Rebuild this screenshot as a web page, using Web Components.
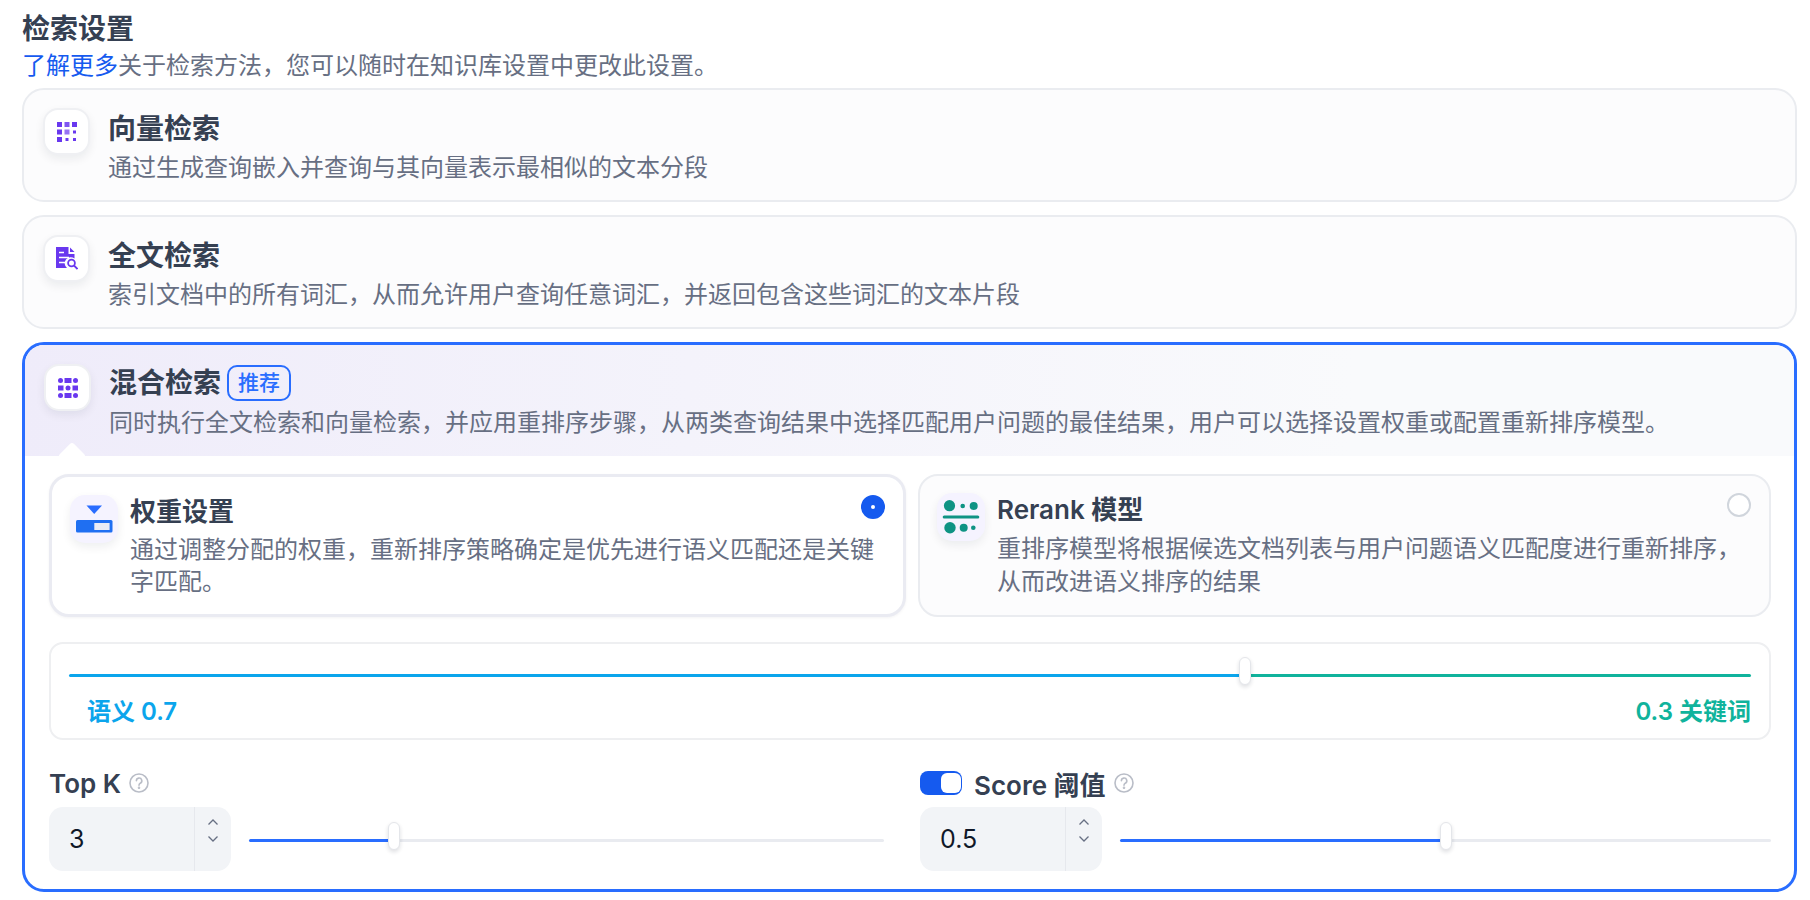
<!DOCTYPE html>
<html lang="zh">
<head>
<meta charset="utf-8">
<title>检索设置</title>
<style>
    html, body{ margin: 0; background: #fff; }
    body{
        font-family: Inter, "Noto Sans CJK SC", sans-serif;
        color: #354052;
    }
</style>
</head>
<body>
<retrieval-settings>
    <method-card>
        <icon-box slot="icon" kind="plain">
            <svg width="20" height="20" viewBox="0 0 20 20" fill="#6938ef">
                <rect x="0" y="0" width="5" height="5"/><rect x="7.5" y="0" width="5" height="5" opacity=".85"/><rect x="15" y="0" width="5" height="5"/>
                <rect x="0" y="7.5" width="5" height="5"/><rect x="7.5" y="7.5" width="5" height="5" opacity=".7"/><rect x="16" y="8.5" width="3" height="3"/>
                <rect x="0" y="15" width="5" height="5"/><rect x="8.5" y="16" width="3" height="3"/><rect x="16" y="16" width="3" height="3"/>
            </svg>
        </icon-box>
        <span slot="title">向量检索</span>
        <span slot="desc">通过生成查询嵌入并查询与其向量表示最相似的文本分段</span>
    </method-card>

    <method-card>
        <icon-box slot="icon" kind="plain">
            <svg width="22" height="23" viewBox="0 0 22 23">
                <path d="M0 0H12.5V7H18.5V11.5A6 6 0 0 0 11 21H0Z" fill="#6938ef"/>
                <path d="M14 0.5L18.5 5H14Z" fill="#6938ef"/>
                <path d="M3 5.5H8M3 10.5H13M3 15.5H9" stroke="#fff" stroke-width="1.6" fill="none"/>
                <circle cx="15.5" cy="16" r="3.4" fill="#fff" stroke="#6938ef" stroke-width="1.8"/>
                <path d="M18 18.5L21.5 22" stroke="#6938ef" stroke-width="1.8" fill="none"/>
            </svg>
        </icon-box>
        <span slot="title">全文检索</span>
        <span slot="desc">索引文档中的所有词汇，从而允许用户查询任意词汇，并返回包含这些词汇的文本片段</span>
    </method-card>

    <method-card active>
        <icon-box slot="icon" kind="plain">
            <svg width="20" height="20" viewBox="0 0 20 20" fill="#6938ef">
                <circle cx="2.5" cy="2.5" r="2.5"/><rect x="6.5" y="0" width="7" height="5"/><circle cx="17.5" cy="2.5" r="2.5"/>
                <rect x="0" y="7.5" width="5.5" height="5"/><circle cx="10" cy="10" r="2.5"/><rect x="14.5" y="7.5" width="5.5" height="5"/>
                <circle cx="2.5" cy="17.5" r="2.5"/><rect x="6.5" y="15" width="7" height="5"/><circle cx="17.5" cy="17.5" r="2.5"/>
            </svg>
        </icon-box>
        <span slot="title">混合检索</span>
        <tag-badge slot="badge">推荐</tag-badge>
        <span slot="desc">同时执行全文检索和向量检索，并应用重排序步骤，从两类查询结果中选择匹配用户问题的最佳结果，用户可以选择设置权重或配置重新排序模型。</span>

        <hybrid-options>
            <mode-card selected>
                <icon-box slot="icon" kind="tint">
                    <svg width="37" height="28" viewBox="0 0 37 28">
                        <path d="M10.5 0.5H26L18.2 9Z" fill="#296dff"/>
                        <rect x="0" y="15" width="36.5" height="12.5" rx="1.5" fill="#1f6ff2"/>
                        <rect x="18.3" y="18" width="15.3" height="7" fill="#eaecf5"/>
                    </svg>
                </icon-box>
                <span slot="title">权重设置</span>
                <span slot="desc">通过调整分配的权重，重新排序策略确定是优先进行语义匹配还是关键字匹配。</span>
            </mode-card>
            <mode-card>
                <icon-box slot="icon" kind="tint">
                    <svg width="48" height="48" viewBox="0 0 48 48" fill="#0e9384">
                        <circle cx="12.5" cy="12.7" r="5.6"/><circle cx="25.7" cy="13" r="2.3"/><circle cx="36.7" cy="13" r="4"/>
                        <rect x="5.7" y="22.5" width="36.6" height="3" rx="1.5"/>
                        <circle cx="13" cy="34.7" r="5.7"/><circle cx="26.7" cy="34.7" r="4"/><circle cx="36.3" cy="34.7" r="2.3"/>
                    </svg>
                </icon-box>
                <span slot="title">Rerank 模型</span>
                <span slot="desc">重排序模型将根据候选文档列表与用户问题语义匹配度进行重新排序，从而改进语义排序的结果</span>
            </mode-card>
        </hybrid-options>

        <weight-panel left="语义 0.7" right="0.3 关键词" pct="69.9"></weight-panel>

        <param-row>
            <param-field value="3" pct="22.8">
                <span slot="label">Top K</span>
            </param-field>
            <param-field value="0.5" pct="50.1">
                <toggle-switch slot="toggle"></toggle-switch>
                <span slot="label">Score 阈值</span>
            </param-field>
        </param-row>
    </method-card>
</retrieval-settings>

<script>
// small helper, every element is a template + an open shadow root
function makeTemplate(html){
    const t = document.createElement('template')
    t.innerHTML = html
    return t
}

class Base extends HTMLElement {
    constructor(){
        super();
        this.attachShadow( {mode: "open"} )
        this.shadowRoot.appendChild(this.constructor.template.content.cloneNode(true))
    }
}

class RetrievalSettings extends Base {
    static template = makeTemplate(`
<style>
    :host{
        display: block;
        padding: 10px 13px 0 22px;
    }
    h2{
        margin: 0;
        font-size: 28px;
        line-height: 38px;
        font-weight: 600;
        color: #354052;
    }
    p{
        margin: 0 0 4px;
        font-size: 24px;
        line-height: 36px;
        color: #676f83;
    }
    a{ color: #155aef; text-decoration: none; }
    .list{
        display: flex;
        flex-direction: column;
        gap: 13px;
    }
</style>
<h2>检索设置</h2>
<p><a href="#">了解更多</a>关于检索方法，您可以随时在知识库设置中更改此设置。</p>
<div class="list"><slot></slot></div>
`)
}

class MethodCard extends Base {
    static template = makeTemplate(`
<style>
    :host{
        display: block;
        box-sizing: border-box;
        border: 2px solid #eaecf0;
        border-radius: 22px;
        background: #fcfcfd;
        overflow: hidden;
    }
    :host([active]){
        border: 3px solid #296dff;
        background: #fff;
    }
    header{
        position: relative;
        display: flex;
        gap: 18px;
        padding: 18px 19px 14px;
    }
    :host([active]) header{
        padding: 19px 19px 15px;
        background: linear-gradient(92deg, #efecfa, #f9fafc 75%);
    }
    .text{ margin-top: 3px; }
    :host([active]) .text{ margin-top: 1px; }
    .title{
        display: flex;
        align-items: center;
        gap: 6px;
        font-size: 28px;
        line-height: 36px;
        font-weight: 600;
        color: #354052;
    }
    .desc{
        margin-top: 3px;
        font-size: 24px;
        line-height: 36px;
        color: #676f83;
    }
    :host([active]) .desc{ margin-top: 4px; }
    .notch{
        display: none;
        position: absolute;
        left: 37px;
        bottom: -10px;
        width: 20px;
        height: 20px;
        border-radius: 3px;
        background: #fff;
        transform: rotate(45deg);
    }
    :host([active]) .notch{ display: block; }
    .body{
        display: none;
        padding: 18px 23px 18px 24px;
    }
    :host([active]) .body{ display: block; }
</style>
<header>
    <slot name="icon"></slot>
    <div class="text">
        <div class="title"><slot name="title"></slot><slot name="badge"></slot></div>
        <div class="desc"><slot name="desc"></slot></div>
    </div>
    <span class="notch"></span>
</header>
<div class="body"><slot></slot></div>
`)
}

class IconBox extends Base {
    static template = makeTemplate(`
<style>
    :host{
        display: flex;
        flex: none;
        align-items: center;
        justify-content: center;
        box-sizing: border-box;
        width: 47px;
        height: 47px;
        border: 2px solid #eff0f3;
        border-radius: 15px;
        background: #fff;
        box-shadow: 0 4px 10px rgba(16, 24, 40, .07);
    }
    :host([kind="tint"]){
        width: 48px;
        height: 48px;
        border: 0;
        background: #f5f3ff;
    }
</style>
<slot></slot>
`)
}

class TagBadge extends Base {
    static template = makeTemplate(`
<style>
    :host{
        display: inline-flex;
        align-items: center;
        box-sizing: border-box;
        height: 36px;
        padding: 0 9px;
        border: 2px solid #296dff;
        border-radius: 10px;
        font-size: 21px;
        font-weight: 500;
        color: #296dff;
    }
</style>
<slot></slot>
`)
}

class HybridOptions extends Base {
    static template = makeTemplate(`
<style>
    :host{
        display: grid;
        grid-template-columns: 857px 1fr;
        gap: 12px;
    }
</style>
<slot></slot>
`)
}

class ModeCard extends Base {
    static template = makeTemplate(`
<style>
    :host{
        position: relative;
        display: flex;
        gap: 12px;
        box-sizing: border-box;
        height: 143px;
        padding: 17px 18px 0 17px;
        border: 2px solid #eaecf0;
        border-radius: 20px;
        background: #fcfcfd;
    }
    :host([selected]){
        padding: 18px 18px 0;
        border: 3px solid #eaebf2;
        background: #fff;
        box-shadow: 0 1px 3px rgba(16, 24, 40, .05);
    }
    .title{
        font-size: 26px;
        line-height: 34px;
        font-weight: 600;
        color: #354052;
    }
    .desc{
        margin-top: 5px;
        font-size: 24px;
        line-height: 33px;
        color: #676f83;
    }
    :host([selected]) .desc{ line-height: 32px; }
    .radio{
        position: absolute;
        top: 17px;
        right: 18px;
        box-sizing: border-box;
        width: 24px;
        height: 24px;
        border: 2px solid #d0d5dc;
        border-radius: 50%;
        background: #fff;
    }
    :host([selected]) .radio{
        top: 18px;
        right: 18px;
        border: 10px solid #155aef;
    }
</style>
<slot name="icon"></slot>
<div>
    <div class="title"><slot name="title"></slot></div>
    <div class="desc"><slot name="desc"></slot></div>
</div>
<span class="radio"></span>
`)
}

class RangeSlider extends Base {
    static observedAttributes = ['pct']
    static template = makeTemplate(`
<style>
    :host{
        position: relative;
        display: flex;
        flex: 1;
        height: 28px;
    }
    .fill, .rest{
        height: 3px;
        margin-top: 17px;
    }
    .fill{
        background: var(--fill, #296dff);
        border-radius: 2px 0 0 2px;
    }
    .rest{
        flex: 1;
        background: var(--rest, #e9ebf0);
        border-radius: 0 2px 2px 0;
    }
    .thumb{
        position: absolute;
        top: 0;
        box-sizing: border-box;
        width: 12px;
        height: 28px;
        margin-left: -6px;
        border: 1px solid #e4e6ea;
        border-radius: 6px;
        background: #fff;
        box-shadow: 0 2px 4px rgba(16, 24, 40, .14);
    }
</style>
<div class="fill"></div>
<div class="rest"></div>
<div class="thumb"></div>
`)
    attributeChangedCallback(name, oldValue, value){
        this.shadowRoot.querySelector('.fill').style.width = value + '%'
        this.shadowRoot.querySelector('.thumb').style.left = value + '%'
    }
}

class WeightPanel extends Base {
    static template = makeTemplate(`
<style>
    :host{
        display: block;
        box-sizing: border-box;
        height: 98px;
        margin-top: 25px;
        padding: 13px 18px 0;
        border: 2px solid #eeeff1;
        border-radius: 14px;
    }
    range-slider{
        display: flex;
        --fill: #0ba5ec;
        --rest: #10b39c;
    }
    .labels{
        display: flex;
        justify-content: space-between;
        margin-top: 11px;
        padding-left: 18px;
        font-size: 24px;
        line-height: 32px;
        font-weight: 600;
    }
    .left{ color: #0ba5ec; }
    .right{ color: #10b39c; }
</style>
<range-slider></range-slider>
<div class="labels"><span class="left"></span><span class="right"></span></div>
`)
    connectedCallback(){
        this.shadowRoot.querySelector('range-slider').setAttribute('pct', this.getAttribute('pct'))
        this.shadowRoot.querySelector('.left').textContent = this.getAttribute('left')
        this.shadowRoot.querySelector('.right').textContent = this.getAttribute('right')
    }
}

class ParamRow extends Base {
    static template = makeTemplate(`
<style>
    :host{
        display: grid;
        grid-template-columns: 835px 1fr;
        gap: 36px;
        margin-top: 25px;
    }
</style>
<slot></slot>
`)
}

class ParamField extends Base {
    static template = makeTemplate(`
<style>
    :host{ display: block; }
    .head{
        display: flex;
        align-items: center;
        height: 36px;
        font-size: 26px;
        font-weight: 600;
        color: #354052;
    }
    help-icon{ margin-left: 8px; }
    .row{
        display: flex;
        gap: 18px;
        margin-top: 6px;
    }
    range-slider{ margin-top: 15px; }
</style>
<div class="head">
    <slot name="toggle"></slot>
    <slot name="label"></slot>
    <help-icon></help-icon>
</div>
<div class="row">
    <number-input></number-input>
    <range-slider></range-slider>
</div>
`)
    connectedCallback(){
        this.shadowRoot.querySelector('number-input').setAttribute('value', this.getAttribute('value'))
        this.shadowRoot.querySelector('range-slider').setAttribute('pct', this.getAttribute('pct'))
    }
}

class NumberInput extends Base {
    static observedAttributes = ['value']
    static template = makeTemplate(`
<style>
    :host{
        display: flex;
        flex: none;
        width: 182px;
        height: 64px;
        border-radius: 14px;
        background: #f2f4f7;
        font-size: 25px;
        color: #101828;
    }
    .val{
        flex: 1;
        padding-left: 20px;
        line-height: 65px;
    }
    .spin{
        display: flex;
        flex-direction: column;
        align-items: center;
        gap: 9px;
        width: 36px;
        padding-top: 11px;
        border-left: 1px solid #e6e8ed;
    }
    svg{ display: block; }
</style>
<div class="val"></div>
<div class="spin">
    <svg width="12" height="8" viewBox="0 0 12 8"><path d="M1.5 6.5L6 2L10.5 6.5" fill="none" stroke="#676f83" stroke-width="1.3"/></svg>
    <svg width="12" height="8" viewBox="0 0 12 8"><path d="M1.5 1.5L6 6L10.5 1.5" fill="none" stroke="#676f83" stroke-width="1.3"/></svg>
</div>
`)
    attributeChangedCallback(name, oldValue, value){
        this.shadowRoot.querySelector('.val').textContent = value
    }
}

class HelpIcon extends Base {
    static template = makeTemplate(`
<style>
    :host{
        display: inline-flex;
        width: 20px;
        height: 20px;
    }
</style>
<svg width="20" height="20" viewBox="0 0 20 20" fill="none" stroke="#b9bdc7" stroke-width="1.6">
    <circle cx="10" cy="10" r="9"/>
    <path d="M7.4 7.8A2.7 2.7 0 1 1 11.3 10.2C10.4 10.8 10 11.2 10 12.2" stroke-linecap="round"/>
    <circle cx="10" cy="14.8" r=".5"/>
</svg>
`)
}

class ToggleSwitch extends Base {
    static template = makeTemplate(`
<style>
    :host{
        display: flex;
        justify-content: flex-end;
        box-sizing: border-box;
        width: 42px;
        height: 24px;
        margin-right: 12px;
        padding: 2px 1px;
        border-radius: 8px;
        background: #155aef;
    }
    div{
        width: 20px;
        height: 20px;
        border-radius: 6px;
        background: #fff;
    }
</style>
<div></div>
`)
}

window.customElements.define('help-icon', HelpIcon);
window.customElements.define('toggle-switch', ToggleSwitch);
window.customElements.define('number-input', NumberInput);
window.customElements.define('range-slider', RangeSlider);
window.customElements.define('weight-panel', WeightPanel);
window.customElements.define('param-field', ParamField);
window.customElements.define('param-row', ParamRow);
window.customElements.define('mode-card', ModeCard);
window.customElements.define('hybrid-options', HybridOptions);
window.customElements.define('tag-badge', TagBadge);
window.customElements.define('icon-box', IconBox);
window.customElements.define('method-card', MethodCard);
window.customElements.define('retrieval-settings', RetrievalSettings);
</script>
</body>
</html>
